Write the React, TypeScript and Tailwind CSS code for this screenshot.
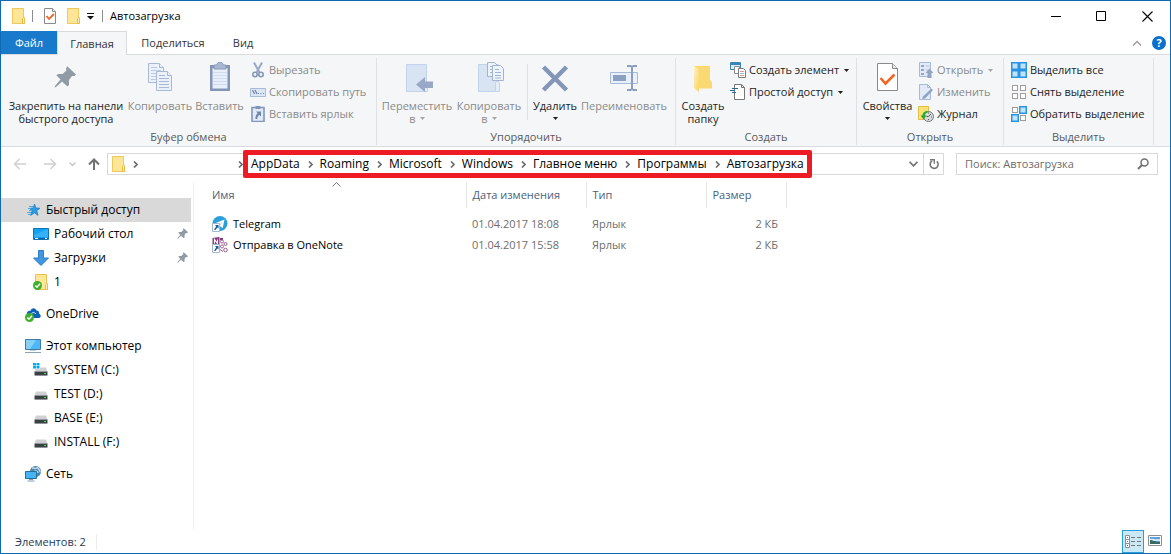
// App.tsx - окно проводника, папка автозагрузки
import React from 'react';

type IconProps = { className?: string };

/* ---------- Общие иконки ---------- */

const FolderIcon: React.FC<IconProps> = ({ className = 'w-4 h-4' }) => (
  <svg className={className} viewBox="0 0 16 16" aria-hidden="true">
    <path d="M3.500.5h11v9h1v6h-12z" fill="#ffe699" stroke="#efc75a" />
    <path d="M4 1h10v14H4z" fill="#ffe596" />
    <path d="M13.500 15.500v-5l1-1 1 1v5z" fill="#fff0bd" stroke="#e9bb45" />
  </svg>
);

const CheckDocIcon: React.FC<IconProps> = ({ className = 'w-4 h-4' }) => (
  <svg className={className} viewBox="0 0 16 16" aria-hidden="true">
    <path d="M2.500.5h8l3 3v12h-11z" fill="#fff" stroke="#8a8a8a" />
    <path d="M10.500.5v3h3" fill="#eee" stroke="#8a8a8a" />
    <path d="M4.500 8l2.500 3 5-5" fill="none" stroke="#f26522" strokeWidth="1.800" />
  </svg>
);

const Caret: React.FC<{ muted?: boolean }> = ({ muted }) => (
  <svg className="w-[5px] h-[3px]" viewBox="0 0 5 3" aria-hidden="true">
    <path d="M0 0h5L2.500 3z" fill={muted ? '#a5a5a5' : '#1e1e1e'} />
  </svg>
);

const Chevron: React.FC = () => (
  <svg className="w-[5px] h-[7px]" viewBox="0 0 5 7" aria-hidden="true">
    <path d="M1 .5l3 3-3 3" fill="none" stroke="#6d6d6d" strokeWidth="1.700" />
  </svg>
);

/* ---------- Иконки ленты ---------- */

const PinIcon: React.FC<IconProps> = ({ className = 'w-8 h-8' }) => (
  <svg className={className} viewBox="0 0 32 32" aria-hidden="true">
    <path d="M16 6l1.500-1.500 8.500 8-1.500 1.500h-2.500l-3 4v5l-1.500 1.500-5.500-5-6 5.500-1.500.5.500-1.500 5.500-6.500-4-4 1.500-1.500h4.500l4-3.500z" fill="#919ba4" />
  </svg>
);

const CopyIcon = () => (
  <svg className="w-8 h-8" viewBox="0 0 32 32" aria-hidden="true">
    <g fill="#eaf1fa" stroke="#a9b9d4">
      <path d="M4.500 1.500h11l4 4v15h-15z" />
      <path d="M15.500 1.500v4h4" />
      <path d="M7 5.500h6M7 8.500h10M7 11.500h10M7 14.500h10M7 17.500h6" stroke="#bccbe2" />
      <path d="M12.500 9.500h11l4 4v15h-15z" />
      <path d="M23.500 9.500v4h4" />
      <path d="M15 13.500h6M15 16.500h10M15 19.500h10M15 22.500h10M15 25.500h10" />
    </g>
  </svg>
);

const PasteIcon = () => (
  <svg className="w-8 h-8" viewBox="0 0 32 32" aria-hidden="true">
    <path d="M6 3h20v26H6z" fill="#8495b5" />
    <path d="M8.500 6h15v20.500h-15z" fill="#e8effa" />
    <path d="M9 10.500h14M9 13.500h14M9 16.500h14M9 19.500h14M9 22.500h14" stroke="#cfdcf0" />
    <path d="M10 3h3c0-4 6-4 6 0h3v4H10z" fill="#a9b7d0" stroke="#8797b5" />
  </svg>
);

const CutIcon = () => (
  <svg className="w-4 h-4" viewBox="0 0 16 16" aria-hidden="true">
    <path d="M4 .5l5.500 10M12 .5l-5.500 10" stroke="#9aaac6" strokeWidth="2" />
    <circle cx="5" cy="12.500" r="2.200" fill="none" stroke="#8496b6" strokeWidth="1.600" />
    <circle cx="11" cy="12.500" r="2.200" fill="none" stroke="#8496b6" strokeWidth="1.600" />
  </svg>
);

const CopyPathIcon = () => (
  <svg className="w-4 h-4" viewBox="0 0 16 16" aria-hidden="true">
    <path d="M.5 4.500h15v8H.5z" fill="#dce7f6" stroke="#a9bad4" />
    <path d="M2.500 6l2 4M5 6l2 4" stroke="#6f83a7" strokeWidth="1.200" />
    <path d="M8 9h1v1H8zM10.500 9h1v1h-1zM13 9h1v1h-1z" fill="#6f83a7" />
  </svg>
);

const PasteShortcutIcon = () => (
  <svg className="w-4 h-4" viewBox="0 0 16 16" aria-hidden="true">
    <path d="M2 1.500h12v14H2z" fill="#dfe9f7" stroke="#8496b6" strokeWidth="1.600" />
    <path d="M5.500 0h5v3h-5z" fill="#8496b6" />
    <path d="M6 5.500h5v5L9.300 9c-1.500 1-2 2.500-2 4H5.500c-.3-2.500.5-4.500 2.200-5.800z" fill="#7186ab" />
  </svg>
);

const MoveToIcon = () => (
  <svg className="w-8 h-8" viewBox="0 0 32 32" aria-hidden="true">
    <path d="M5.500 2.500h20v27h-20z" fill="#d8e3f3" stroke="#c3d3ea" />
    <path d="M22.500 29.500v-9l2-1.500 2 1.500v9z" fill="#e5edf8" stroke="#c3d3ea" />
    <path d="M15 22.500l9-7.500v4.500h8v6.500h-8V30z" fill="#98a8c6" />
  </svg>
);

const CopyToIcon = () => (
  <svg className="w-8 h-8" viewBox="0 0 32 32" aria-hidden="true">
    <path d="M5.500 2.500h20v27h-20z" fill="#d8e3f3" stroke="#c3d3ea" />
    <path d="M22.500 29.500v-9l2-1.500 2 1.500v9z" fill="#e5edf8" stroke="#c3d3ea" />
    <g fill="#edf3fb" stroke="#a3b4d0">
      <path d="M14.500.5h7l3 3v11h-10z" />
      <path d="M17 4.500h4M17 7.500h5M17 10.500h5" />
      <path d="M19.500 3.500h8l3 3v12h-11z" />
      <path d="M22 7.500h4M22 10.500h6M22 13.500h6M22 16h6" />
    </g>
  </svg>
);

const DeleteIcon = () => (
  <svg className="w-8 h-8" viewBox="0 0 32 32" aria-hidden="true">
    <path d="M4.500 5l23 23M27.500 5l-23 23" stroke="#8496b8" strokeWidth="4.500" />
  </svg>
);

const RenameIcon = () => (
  <svg className="w-8 h-8" viewBox="0 0 32 32" aria-hidden="true">
    <path d="M2.500 10.500h27v11h-27z" fill="#e8f0fb" stroke="#a9bad6" />
    <path d="M5 13h13v6H5z" fill="#8ca0c2" />
    <path d="M19 4h3.500l1.500 1 1.500-1H29M24 5v22M19 28h3.500l1.500-1 1.500 1H29" fill="none" stroke="#8c9dbd" strokeWidth="2" />
  </svg>
);

const NewFolderIcon = () => (
  <svg className="w-8 h-8" viewBox="0 0 32 32" aria-hidden="true">
    <defs>
      <linearGradient id="newFolder" x1="0" y1="0" x2="1" y2="1">
        <stop offset="0" stopColor="#fff1c2" />
        <stop offset="1" stopColor="#fbd361" />
      </linearGradient>
    </defs>
    <path d="M7 4h16v14l2 2v6.500H11z" fill="#fad872" />
    <path d="M7 4l5 3v23l-5-4z" fill="url(#newFolder)" />
  </svg>
);

const NewItemIcon = () => (
  <svg className="w-4 h-4" viewBox="0 0 16 16" aria-hidden="true">
    <path d="M.5.5h10v7H.5z" fill="#d8ecf9" stroke="#3a87b7" />
    <path d="M1 1h9v2H1z" fill="#3a87b7" />
    <path d="M4.500 4.500h5v7h-5z" fill="#fff" stroke="#8a8a8a" />
    <path d="M8.500 6.500h5l2 2v7h-7z" fill="#fff" stroke="#7c7c7c" />
    <path d="M10 9.500h4M10 13.500h4" stroke="#e79590" />
    <path d="M10 11.500h4" stroke="#8fb9dc" />
  </svg>
);

const EasyAccessIcon = () => (
  <svg className="w-4 h-4" viewBox="0 0 16 16" aria-hidden="true">
    <path d="M4.500.5h7l3 3v12h-10z" fill="#fff" stroke="#777" />
    <path d="M11.500.5v3h3" fill="none" stroke="#777" />
    <path d="M2 4.500h6M0 6.500h5M2 8.500h4" stroke="#25689c" strokeWidth="1.200" />
  </svg>
);

const PropertiesIcon = () => (
  <svg className="w-8 h-8" viewBox="0 0 32 32" aria-hidden="true">
    <path d="M5.500 1.500h15l5 5v22h-20z" fill="#fff" stroke="#8a8a8a" />
    <path d="M20.500 1.500v5h5" fill="#e6e6e6" stroke="#8a8a8a" />
    <path d="M8.500 16l5 5.500 9-9" fill="none" stroke="#f26522" strokeWidth="2.600" />
  </svg>
);

const OpenIcon = () => (
  <svg className="w-4 h-4" viewBox="0 0 16 16" aria-hidden="true">
    <path d="M1.500.5h11v14h-11z" fill="#e1eaf7" stroke="#a9bad6" />
    <path d="M3 3h3v2H3zM3 7h3v2H3zM3 11h3v2H3z" fill="#93a6c6" />
    <path d="M7.500 4h4M7.500 8h3" stroke="#b5c4dc" />
    <path d="M9.500 16v-5H7.500l4-4.500 4 4.500h-2v5z" fill="#94a4c3" />
  </svg>
);

const EditIcon = () => (
  <svg className="w-4 h-4" viewBox="0 0 16 16" aria-hidden="true">
    <path d="M1.500.5h8l3 3v12h-11z" fill="#e1eaf7" stroke="#a9bad6" />
    <path d="M9.500.5v3h3" fill="none" stroke="#a9bad6" />
    <path d="M5 12.500l8.500-8 1.500 1.500-8 8.500-3 .5z" fill="#8fa2c3" />
  </svg>
);

const HistoryIcon = () => (
  <svg className="w-4 h-4" viewBox="0 0 16 16" aria-hidden="true">
    <path d="M.5.500h10v13h-10z" fill="#ffe274" stroke="#e3bd45" />
    <circle cx="10.500" cy="10.500" r="5" fill="#d9dcdf" stroke="#777" />
    <path d="M10.500 10.500l2.500-2.500M10.500 10.500h-2M10.500 6.500v1M14 11h-1M10.500 14v-1" stroke="#555" fill="none" />
    <path d="M9.500 5C6 5 4.500 7.500 4.500 9.500H2.500l3 4 3-4H7c0-1.500 1-2.500 2.500-2.700z" fill="#2ba82f" />
  </svg>
);

// сетка 2x2: закрашены выбранные ячейки
const SelectGridIcon: React.FC<{ selected: boolean[] }> = ({ selected }) => (
  <svg className="w-4 h-4" viewBox="0 0 16 16" aria-hidden="true">
    {selected.map((on, i) => {
      const x = (i % 2) * 8;
      const y = Math.floor(i / 2) * 8;
      return on ? (
        <rect key={i} x={x + 0.75} y={y + 0.75} width="6.500" height="6.500" fill="#bfe3fb" stroke="#2c93e3" strokeWidth="1.500" />
      ) : (
        <rect key={i} x={x + 1.5} y={y + 1.5} width="5" height="5" fill="#fff" stroke="#9c9c9c" />
      );
    })}
  </svg>
);

/* ---------- Иконки области навигации ---------- */

const QuickAccessIcon = () => (
  <svg className="w-4 h-4" viewBox="0 0 16 16" aria-hidden="true">
    <path d="M9.500 2l1.400 4 4.100.200-3.200 2.600 1.200 4.600-3.500-2.600-3.900 2.600 1.400-4.400L4.500 6.400l3.700-.4z" fill="#2b9be4" stroke="#1c78bd" strokeWidth=".7" />
    <path d="M4 4.500h4M3 6.500h3M4 8.500h3M2 10.500h4M3 12.500h3" stroke="#4aa9e2" />
  </svg>
);

const DesktopIcon = () => (
  <svg className="w-4 h-4" viewBox="0 0 16 16" aria-hidden="true">
    <path d="M.5 2.500h15v11H.5z" fill="#11a0f2" stroke="#1173b8" />
    <path d="M1 9l14-6v8H1z" fill="#36b1f7" />
    <path d="M1 12h14v1H1z" fill="#0a5f9d" />
    <path d="M2 12h3v1H2zM12 12h2v1h-2z" fill="#fff" />
  </svg>
);

const DownloadsIcon = () => (
  <svg className="w-4 h-4" viewBox="0 0 16 16" aria-hidden="true">
    <path d="M5.500.5h5V8h5L8 15.500.5 8h5z" fill="#3f97e0" stroke="#2e7dc2" />
  </svg>
);

const Badge = () => (
  <g>
    <circle cx="4.500" cy="11.500" r="4.500" fill="#3fae2a" />
    <path d="M2.300 11.500l1.700 1.800 3-3.500" fill="none" stroke="#fff" strokeWidth="1.400" />
  </g>
);

const SyncedFolderIcon = () => (
  <svg className="w-4 h-4" viewBox="0 0 16 16" aria-hidden="true">
    <path d="M2.500.5h11v9h1v6h-12z" fill="#ffe596" stroke="#e9c152" />
    <path d="M12.500 15.500v-5l1-1 1 1v5z" fill="#fff0bd" stroke="#e9bb45" />
    <Badge />
  </svg>
);

const OneDriveIcon = () => (
  <svg className="w-4 h-4" viewBox="0 0 16 16" aria-hidden="true">
    <path d="M2 9C1 6 4 4 5.500 5 6 2 10 1 11.500 4.500 14 4.500 14.500 7 14 7.500c2 1 2.500 4 0 4.500H4z" fill="#0c62b8" />
    <path d="M5 9.500C6.500 6 9.500 5.800 11 8" fill="none" stroke="#fff" strokeWidth=".8" />
    <Badge />
  </svg>
);

const ComputerIcon = () => (
  <svg className="w-4 h-4" viewBox="0 0 16 16" aria-hidden="true">
    <path d="M.5 1.500h15v10H.5z" fill="#4db8f5" stroke="#3b7ba6" />
    <path d="M1 2h10L5 11H1z" fill="#86d0fa" />
    <path d="M5 12h6v1H5z" fill="#c4d0d8" />
    <path d="M0 14.500h16" stroke="#8ba2b1" />
  </svg>
);

const DriveIcon: React.FC<{ system?: boolean }> = ({ system }) => (
  <svg className="w-4 h-4" viewBox="0 0 16 16" aria-hidden="true">
    <path d="M3 5.500h10l1.500 4h-13z" fill="#cfd2d4" />
    <path d="M1.500 9.500h13v4h-13z" fill="#3c4145" />
    <path d="M2 13h12v1H2z" fill="#8f9498" />
    <path d="M11 11h2v1h-2z" fill="#3be04c" />
    {system && (
      <>
        <path d="M0 1h7v6H0z" fill="#fff" />
        <path d="M0 1h3v2.500H0zM3.500 1H6.500v2.500H3.500zM0 4h3v2.500H0zM3.500 4H6.500v2.500H3.500z" fill="#00adef" />
      </>
    )}
  </svg>
);

const NetworkIcon = () => (
  <svg className="w-4 h-4" viewBox="0 0 16 16" aria-hidden="true">
    <circle cx="10.500" cy="5.500" r="5.500" fill="#4f86aa" />
    <path d="M7 2c2 0 3 1 5 0s2 3 3.500 4M9 6c1-2 4-1 4 1" fill="none" stroke="#b9d9ea" strokeWidth="1.500" />
    <path d="M.5 5.500h11v7H.5z" fill="#46b3f3" stroke="#25709f" />
    <path d="M4 13h4v1H4zM2.500 14.500h7v1h-7z" fill="#829daf" />
  </svg>
);

/* ---------- Иконки файлов ---------- */

const ShortcutArrow = () => (
  <g>
    <path d="M.5 7.500h7v8h-7z" fill="#fff" stroke="#a3b7cc" />
    <path d="M3 9h3.500v3.500L5.300 11.400 3.500 14H2l2.200-3.700z" fill="#1c5a9d" />
  </g>
);

const TelegramIcon = () => (
  <svg className="w-4 h-4" viewBox="0 0 16 16" aria-hidden="true">
    <circle cx="8" cy="7.500" r="7.500" fill="#2b9fda" />
    <path d="M2.500 7.500l10-4-1.800 8.500-3-2z" fill="#fff" />
    <path d="M6.500 9l4.500-3.500L7.500 10z" fill="#a9d3ec" />
    <ShortcutArrow />
  </svg>
);

const OneNoteIcon = () => (
  <svg className="w-4 h-4" viewBox="0 0 16 16" aria-hidden="true">
    <path d="M.5 1l7-1v8h-7zM8 1h3v2H8z" fill="#80397b" />
    <path d="M2.500 6.500v-4l3 4v-4" fill="none" stroke="#fff" strokeWidth="1.100" />
    <g fill="none" stroke="#9a5f96">
      <circle cx="10" cy="4.500" r="1.500" />
      <circle cx="13.500" cy="7" r="1.500" />
      <circle cx="10" cy="9.500" r="1.500" />
      <circle cx="13.500" cy="13" r="1.800" />
      <path d="M8 12.500l3 2" />
    </g>
    <ShortcutArrow />
  </svg>
);

/* ---------- Кнопки ленты ---------- */

interface BigButtonProps {
  icon: React.ReactNode;
  lines: string[];
  width: string;
  disabled?: boolean;
  caret?: 'inline' | 'below';
}

const BigButton: React.FC<BigButtonProps> = ({ icon, lines, width, disabled, caret }) => (
  <button
    disabled={disabled}
    className={`${width} flex flex-col items-center pt-1 whitespace-nowrap leading-[13px] ${
      disabled ? 'text-[#8a8a8a]' : 'text-[#1e1e1e]'
    }`}
  >
    <span className="mb-[5px]">{icon}</span>
    {lines.map((line, i) => (
      <span key={line} className="flex items-center gap-1">
        {line}
        {caret === 'inline' && i === lines.length - 1 && <Caret muted={disabled} />}
      </span>
    ))}
    {caret === 'below' && (
      <span className="flex h-3 items-center">
        <Caret />
      </span>
    )}
  </button>
);

interface SmallButtonProps {
  icon: React.ReactNode;
  label: string;
  disabled?: boolean;
  caret?: boolean;
}

const SmallButton: React.FC<SmallButtonProps> = ({ icon, label, disabled, caret }) => (
  <button
    disabled={disabled}
    className={`flex h-[22px] items-center gap-[3px] whitespace-nowrap ${
      disabled ? 'text-[#8a8a8a]' : 'text-[#1e1e1e]'
    }`}
  >
    {icon}
    <span>{label}</span>
    {caret && (
      <span className="ml-0.5">
        <Caret muted={disabled} />
      </span>
    )}
  </button>
);

const RibbonGroup: React.FC<{ title: string; width: string; children: React.ReactNode }> = ({ title, width, children }) => (
  <section className={`${width} flex shrink-0 flex-col border-r border-[#dfe1e4]`}>
    <div className="flex flex-1 items-start">{children}</div>
    <h2 className="text-center leading-4 text-[#5a5a5a]">{title}</h2>
  </section>
);

const SmallColumn: React.FC<{ children: React.ReactNode }> = ({ children }) => (
  <div className="flex flex-col items-start pt-px">{children}</div>
);

/* ---------- Данные ---------- */

const CRUMBS = ['AppData', 'Roaming', 'Microsoft', 'Windows', 'Главное меню', 'Программы', 'Автозагрузка'];

const FILES = [
  { name: 'Telegram', icon: <TelegramIcon />, date: '01.04.2017 18:08', type: 'Ярлык', size: '2 КБ' },
  { name: 'Отправка в OneNote', icon: <OneNoteIcon />, date: '01.04.2017 15:58', type: 'Ярлык', size: '2 КБ' },
];

interface NavItem {
  label: string;
  icon: React.ReactNode;
  pinned?: boolean;
}

const NAV: { root: NavItem; active?: boolean; children: NavItem[] }[] = [
  {
    root: { label: 'Быстрый доступ', icon: <QuickAccessIcon /> },
    active: true,
    children: [
      { label: 'Рабочий стол', icon: <DesktopIcon />, pinned: true },
      { label: 'Загрузки', icon: <DownloadsIcon />, pinned: true },
      { label: '1', icon: <SyncedFolderIcon /> },
    ],
  },
  { root: { label: 'OneDrive', icon: <OneDriveIcon /> }, children: [] },
  {
    root: { label: 'Этот компьютер', icon: <ComputerIcon /> },
    children: [
      { label: 'SYSTEM (C:)', icon: <DriveIcon system /> },
      { label: 'TEST (D:)', icon: <DriveIcon /> },
      { label: 'BASE (E:)', icon: <DriveIcon /> },
      { label: 'INSTALL (F:)', icon: <DriveIcon /> },
    ],
  },
  { root: { label: 'Сеть', icon: <NetworkIcon /> }, children: [] },
];

/* ---------- Части окна ---------- */

const TitleBar = () => (
  <header className="flex h-[30px] items-center pl-2">
    <FolderIcon />
    <span className="ml-[7px] h-3 w-px bg-[#8c8c8c]" />
    <button aria-label="Свойства" className="ml-[9px]">
      <CheckDocIcon />
    </button>
    <button aria-label="Новая папка" className="ml-[6px]">
      <FolderIcon />
    </button>
    <button aria-label="Настройка панели быстрого доступа" className="ml-[7px]">
      <svg className="h-[7px] w-[7px]" viewBox="0 0 7 7">
        <path d="M0 0h7v1H0zM0 3h7L3.500 6.500z" fill="#111" />
      </svg>
    </button>
    <span className="ml-2 h-3 w-px bg-[#8c8c8c]" />
    <h1 className="ml-[7px] text-black">Автозагрузка</h1>
    <div className="ml-auto flex h-full">
      <button aria-label="Свернуть" className="flex w-[46px] items-center justify-center">
        <svg className="h-[11px] w-[11px]" viewBox="0 0 11 11">
          <path d="M1 5.500h10" stroke="#000" />
        </svg>
      </button>
      <button aria-label="Развернуть" className="flex w-[46px] items-center justify-center">
        <svg className="h-[11px] w-[11px]" viewBox="0 0 11 11">
          <path d="M.5.500h9v9h-9z" fill="none" stroke="#000" />
        </svg>
      </button>
      <button aria-label="Закрыть" className="flex w-[46px] items-center justify-center">
        <svg className="h-[11px] w-[11px]" viewBox="0 0 11 11">
          <path d="M.5.500l10 10M10.500.5l-10 10" stroke="#000" strokeWidth="1.100" />
        </svg>
      </button>
    </div>
  </header>
);

const Tabs = () => (
  <nav className="flex h-6 items-stretch border-b border-[#dadbdc] text-[#333]">
    <button className="w-14 bg-[#1979ca] text-white">Файл</button>
    <button className="-mb-px w-[70px] border border-b-0 border-[#dadbdc] bg-[#f5f6f7]">Главная</button>
    <button className="w-[92px]">Поделиться</button>
    <button className="w-12">Вид</button>
    <div className="ml-auto flex items-center gap-[10px] pr-1">
      <button aria-label="Свернуть ленту">
        <svg className="h-[6px] w-[10px]" viewBox="0 0 10 6">
          <path d="M1 5.500l4-4 4 4" fill="none" stroke="#9b9b9b" strokeWidth="1.400" />
        </svg>
      </button>
      <button aria-label="Справка" className="h-[14px] w-[14px] rounded-full bg-[#0a70cc] font-bold leading-[14px] text-white">
        ?
      </button>
    </div>
  </nav>
);

const Ribbon = () => (
  <div className="flex h-[92px] border-b border-[#dadbdc] bg-[#f5f6f7] pt-[3px] pb-px">
    <RibbonGroup title="Буфер обмена" width="w-[376px]">
      <BigButton icon={<PinIcon />} lines={['Закрепить на панели', 'быстрого доступа']} width="w-[130px]" />
      <BigButton icon={<CopyIcon />} lines={['Копировать']} width="w-[58px]" disabled />
      <BigButton icon={<PasteIcon />} lines={['Вставить']} width="w-[61px]" disabled />
      <SmallColumn>
        <SmallButton icon={<CutIcon />} label="Вырезать" disabled />
        <SmallButton icon={<CopyPathIcon />} label="Скопировать путь" disabled />
        <SmallButton icon={<PasteShortcutIcon />} label="Вставить ярлык" disabled />
      </SmallColumn>
    </RibbonGroup>

    <RibbonGroup title="Упорядочить" width="w-[299px]">
      <BigButton icon={<MoveToIcon />} lines={['Переместить', 'в']} width="w-20" disabled caret="inline" />
      <BigButton icon={<CopyToIcon />} lines={['Копировать', 'в']} width="w-16" disabled caret="inline" />
      <span className="mx-[6px] mt-[6px] h-14 w-px bg-[#dfe1e4]" />
      <BigButton icon={<DeleteIcon />} lines={['Удалить']} width="w-[42px]" caret="below" />
      <BigButton icon={<RenameIcon />} lines={['Переименовать']} width="w-24" disabled />
    </RibbonGroup>

    <RibbonGroup title="Создать" width="w-[181px]">
      <BigButton icon={<NewFolderIcon />} lines={['Создать', 'папку']} width="w-[54px]" />
      <SmallColumn>
        <SmallButton icon={<NewItemIcon />} label="Создать элемент" caret />
        <SmallButton icon={<EasyAccessIcon />} label="Простой доступ" caret />
      </SmallColumn>
    </RibbonGroup>

    <RibbonGroup title="Открыть" width="w-[147px]">
      <BigButton icon={<PropertiesIcon />} lines={['Свойства']} width="w-[61px]" caret="below" />
      <SmallColumn>
        <SmallButton icon={<OpenIcon />} label="Открыть" disabled caret />
        <SmallButton icon={<EditIcon />} label="Изменить" disabled />
        <SmallButton icon={<HistoryIcon />} label="Журнал" />
      </SmallColumn>
    </RibbonGroup>

    <RibbonGroup title="Выделить" width="w-[150px]">
      <div className="pl-[7px]">
        <SmallColumn>
          <SmallButton icon={<SelectGridIcon selected={[true, true, true, true]} />} label="Выделить все" />
          <SmallButton icon={<SelectGridIcon selected={[false, false, false, false]} />} label="Снять выделение" />
          <SmallButton icon={<SelectGridIcon selected={[false, true, true, false]} />} label="Обратить выделение" />
        </SmallColumn>
      </div>
    </RibbonGroup>
  </div>
);

const AddressBar = () => (
  <div className="flex items-center px-3 pt-[6px]">
    <div className="flex w-[94px] items-center">
      <button aria-label="Назад" disabled>
        <svg className="h-3 w-[14px]" viewBox="0 0 14 12">
          <path d="M13 6H2M6.500 1L1.500 6l5 5" fill="none" stroke="#d0d0d0" strokeWidth="1.500" />
        </svg>
      </button>
      <button aria-label="Вперед" disabled className="ml-4">
        <svg className="h-3 w-[14px]" viewBox="0 0 14 12">
          <path d="M1 6h11M7.500 1l5 5-5 5" fill="none" stroke="#d0d0d0" strokeWidth="1.500" />
        </svg>
      </button>
      <button aria-label="Последние расположения" className="ml-3">
        <svg className="h-1 w-[7px]" viewBox="0 0 7 4">
          <path d="M.5.500l3 3 3-3" fill="none" stroke="#c6c6c6" strokeWidth="1.400" />
        </svg>
      </button>
      <button aria-label="Вверх" className="ml-3">
        <svg className="h-3 w-3" viewBox="0 0 12 12">
          <path d="M6 12V2M1 6.500l5-5 5 5" fill="none" stroke="#717171" strokeWidth="2" />
        </svg>
      </button>
    </div>

    <div className="flex h-[22px] min-w-0 flex-1 items-center border border-[#d9d9d9] text-black">
      <span className="ml-px">
        <FolderIcon />
      </span>
      <span className="ml-2 flex w-[110px] justify-between">
        <Chevron />
        <Chevron />
      </span>
      <ol className="relative ml-2 flex items-center text-[12px] whitespace-nowrap">
        {CRUMBS.map((crumb, i) => (
          <li key={crumb} className="flex items-center">
            {i > 0 && (
              <span className="mr-[7px] ml-2">
                <Chevron />
              </span>
            )}
            <a href="#">{crumb}</a>
          </li>
        ))}
        {/* красная рамка вокруг пути */}
        <span className="pointer-events-none absolute -inset-x-2 -inset-y-[6px] rounded-xs border-[5px] border-[#ed1c24]" />
      </ol>
      <button aria-label="Предыдущие расположения" className="ml-auto mr-[5px]">
        <svg className="h-[6px] w-[9px]" viewBox="0 0 9 6">
          <path d="M.5.800l4 4 4-4" fill="none" stroke="#777" strokeWidth="1.800" />
        </svg>
      </button>
      <button aria-label="Обновить" className="flex h-full w-5 items-center justify-center border-l border-[#d9d9d9]">
        <svg className="h-3 w-[10px]" viewBox="0 0 10 12">
          <path d="M7.800 3.400a4 4 0 1 1-4.800-.4" fill="none" stroke="#777" strokeWidth="1.600" />
          <path d="M1 1.700h4.300v4" fill="none" stroke="#777" strokeWidth="1.400" />
        </svg>
      </button>
    </div>

    <label className="ml-3 flex h-[22px] w-[202px] items-center border border-[#d9d9d9] px-2">
      <input
        type="search"
        aria-label="Поиск: Автозагрузка"
        placeholder="Поиск: Автозагрузка"
        className="min-w-0 flex-1 outline-none placeholder:text-[#6d6d6d]"
      />
      <svg className="h-3 w-3" viewBox="0 0 12 12" aria-hidden="true">
        <circle cx="7.500" cy="4.500" r="3.500" fill="none" stroke="#717171" strokeWidth="1.500" />
        <path d="M5 7L1 11" stroke="#717171" strokeWidth="2" />
      </svg>
    </label>
  </div>
);

const NavRow: React.FC<{ item: NavItem; nested?: boolean; active?: boolean }> = ({ item, nested, active }) => (
  <a
    href="#"
    className={`mr-[2px] flex h-6 items-center text-black ${nested ? 'pl-8' : 'pl-6'} ${active ? 'bg-[#d9d9d9]' : ''}`}
  >
    {item.icon}
    <span className="ml-[5px]">{item.label}</span>
    {item.pinned && <PinIcon className="ml-auto h-4 w-4" />}
  </a>
);

const Sidebar = () => (
  <aside className="flex w-[193px] shrink-0 flex-col gap-2 border-r border-[#f0f0f0] pt-4 text-[12px]">
    {NAV.map(group => (
      <div key={group.root.label}>
        <NavRow item={group.root} active={group.active} />
        {group.children.map(item => (
          <NavRow key={item.label} item={item} nested />
        ))}
      </div>
    ))}
  </aside>
);

const FileTable = () => (
  <main className="min-w-0 flex-1 pl-3">
    <table className="table-fixed text-left">
      <thead>
        <tr className="h-[26px] text-[#4c607a]">
          <th className="relative w-[260px] border-r border-[#e5e5e5] pl-[6px] font-normal">
            Имя
            <svg className="absolute top-0 left-[126px] h-[5px] w-[9px]" viewBox="0 0 9 5" aria-hidden="true">
              <path d="M.5 4.500l4-4 4 4" fill="none" stroke="#7a7a7a" />
            </svg>
          </th>
          <th className="w-[120px] border-r border-[#e5e5e5] pl-[6px] font-normal">Дата изменения</th>
          <th className="w-[120px] border-r border-[#e5e5e5] pl-[6px] font-normal">Тип</th>
          <th className="w-20 border-r border-[#e5e5e5] pl-[6px] font-normal">Размер</th>
        </tr>
      </thead>
      <tbody className="before:block before:h-[5px]">
        {FILES.map(file => (
          <tr key={file.name} className="h-[21px] text-[#6d6d6d]">
            <td className="pl-[6px] text-black">
              <span className="flex items-center gap-[5px]">
                {file.icon}
                {file.name}
              </span>
            </td>
            <td className="pl-[6px]">{file.date}</td>
            <td className="pl-[6px]">{file.type}</td>
            <td className="pr-2 text-right">{file.size}</td>
          </tr>
        ))}
      </tbody>
    </table>
  </main>
);

const StatusBar = () => (
  <footer className="flex h-[23px] items-center pl-[14px] text-[#1e395b]">
    <span className="border-r border-[#ececec] pr-[10px]">Элементов: 2</span>
    <div className="ml-auto flex h-full">
      <button aria-label="Таблица" className="flex w-[22px] items-center justify-center border border-[#26a0da] bg-[#cbe8f6]">
        <svg className="h-[14px] w-4" viewBox="0 0 16 14">
          <path d="M.5.500h4v4h-4zM.5 4.500h4v4h-4zM.5 8.500h4v4h-4z" fill="#fff" stroke="#8e8e8e" />
          <path d="M2 2h1v1H2z" fill="#3872b0" />
          <path d="M2 6h1v1H2zM2 10h1v1H2z" fill="#b04a38" />
          <path d="M6 2.500h4M12 2.500h4M6 6.500h4M12 6.500h4M6 10.500h4M12 10.500h4" stroke="#757575" />
        </svg>
      </button>
      <button aria-label="Крупные значки" className="flex w-[26px] items-start justify-start pt-[5px] pl-1">
        <svg className="h-[11px] w-[14px]" viewBox="0 0 14 11">
          <path d="M.5.500h13v10H.5z" fill="#fff" stroke="#8e8e8e" />
          <path d="M2 2h10v7H2z" fill="#5c9fe0" />
          <path d="M2 4c3-1 5 1 10 0v2H2z" fill="#d6ebf8" />
          <path d="M2 5c3 0 5 2 10 2v2H2z" fill="#3b6a63" />
        </svg>
      </button>
    </div>
  </footer>
);

const App: React.FC = () => {
  return (
    <div className="flex h-screen flex-col border border-[#0e6ab3] bg-white font-['Open_Sans','Noto_Sans',sans-serif] text-[11px] leading-4">
      <TitleBar />
      <Tabs />
      <Ribbon />
      <AddressBar />
      <div className="mt-[7px] flex min-h-0 flex-1">
        <Sidebar />
        <FileTable />
      </div>
      <StatusBar />
    </div>
  );
};

export default App;
